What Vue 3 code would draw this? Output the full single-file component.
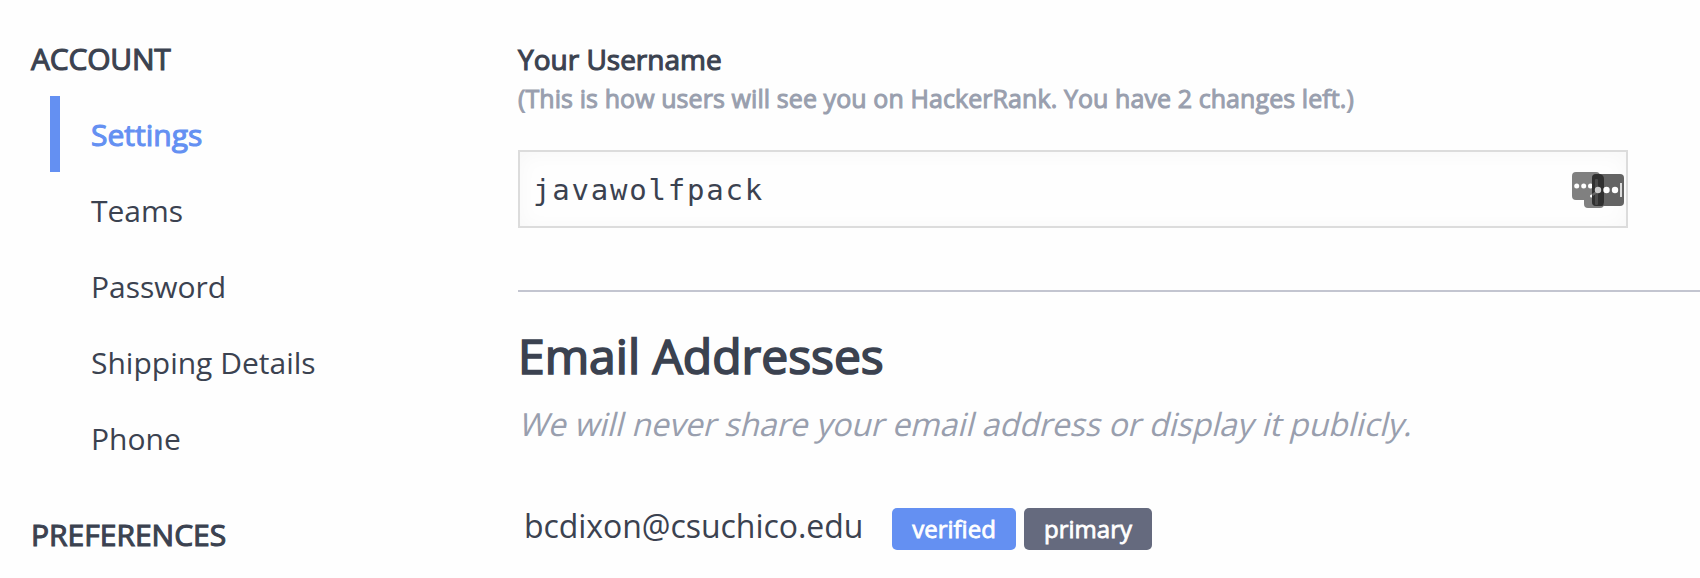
<script setup>
const accountLinks = ['Settings', 'Teams', 'Password', 'Shipping Details', 'Phone']
const active = 'Settings'
</script>

<template>
  <div class="page">
    <nav class="sidebar">
      <h3 class="group">ACCOUNT</h3>
      <ul class="links">
        <li v-for="link in accountLinks" :key="link" :class="['link', { active: link === active }]">
          <span>{{ link }}</span>
        </li>
      </ul>
      <h3 class="group second">PREFERENCES</h3>
    </nav>
    <main class="content">
      <section class="username">
        <div class="label"><span>Your Username</span></div>
        <div class="hint"><span>(This is how users will see you on HackerRank. You have 2 changes left.)</span></div>
        <div class="field">
          <span class="value">javawolfpack</span>
          <svg class="managers" width="52" height="36" viewBox="0 0 52 36">
            <path d="M4 0h20a4 4 0 0 1 4 4v8h4v20a4 4 0 0 1-4 4H16a4 4 0 0 1-4-4v-4H4a4 4 0 0 1-4-4V4a4 4 0 0 1 4-4z" fill="#808080" />
            <g fill="#fff"><circle cx="4.7" cy="14" r="2.5" /><circle cx="11.7" cy="14" r="2.5" /><circle cx="18.5" cy="14" r="2.5" /><circle cx="19.5" cy="24" r="1.5" /></g>
            <rect x="20" y="2" width="32" height="32" rx="4" fill="#646464" />
            <path d="M24 2h4q4 1 4 5v23q0 3-2 4h-6a4 4 0 0 1-4-4V6a4 4 0 0 1 4-4z" fill="#303030" />
            <rect x="23" y="7" width="3" height="26" rx="1" fill="#4b4b4b" />
            <path d="M20 22l4-3 1 2-4 3z" fill="#666" />
            <circle cx="26" cy="18" r="3.2" fill="#ccc" />
            <circle cx="34.5" cy="18" r="3.2" fill="#fff" />
            <circle cx="43" cy="18" r="3.2" fill="#fff" />
            <rect x="48" y="11" width="2" height="14" fill="#ddd" />
          </svg>
        </div>
      </section>
      <section class="emails">
        <h2 class="title"><span>Email Addresses</span></h2>
        <p class="note"><span>We will never share your email address or display it publicly.</span></p>
        <div class="row">
          <span class="address">bcdixon@csuchico.edu</span>
          <span class="badge verified">verified</span>
          <span class="badge primary">primary</span>
        </div>
      </section>
    </main>
  </div>
</template>

<style>
body {
  background: #fefefe;
}
</style>

<style scoped>
.page {
  display: flex;
  height: 578px;
  overflow: hidden;
  color: #3b4250;
  font: 30px "Open Sans", sans-serif;
  white-space: nowrap;
}
.sidebar {
  width: 518px;
  flex: none;
  box-sizing: border-box;
  padding: 39px 0 0 31px;
}
.group {
  margin: 0;
  font-size: 30px;
  font-weight: 400;
  line-height: 40px;
  letter-spacing: -0.2px;
  -webkit-text-stroke: 1.1px;
}
.second {
  margin-top: 39px;
  letter-spacing: 0;
}
.links {
  list-style: none;
  margin: 17px 0 0 19px;
  padding: 0;
}
.link {
  height: 76px;
  box-sizing: border-box;
  line-height: 78px;
  padding-left: 31px;
  border-left: 10px solid transparent;
}
.active {
  color: #6490f2;
  border-color: #6490f2;
  -webkit-text-stroke: 1.1px;
}
.content {
  flex: 1;
  min-width: 0;
}
.username {
  height: 290px;
  box-sizing: border-box;
  padding-top: 39px;
}
.label {
  font-size: 28px;
  line-height: 40px;
  -webkit-text-stroke: 1.1px;
}
.hint {
  margin-top: 1px;
  font-size: 25px;
  line-height: 36px;
  letter-spacing: 0.08px;
  color: #999fae;
  -webkit-text-stroke: 1px;
}
.field {
  display: flex;
  align-items: center;
  justify-content: space-between;
  box-sizing: border-box;
  width: 1110px;
  height: 78px;
  margin-top: 34px;
  padding: 1px 2px 0 13px;
  border: 2px solid #dcdcdc;
  box-shadow: inset 0 2px 20px rgba(0, 0, 0, 0.03);
}
.value {
  font: 29px "DejaVu Sans Mono", monospace;
  letter-spacing: 1.8px;
}
.managers {
  flex: none;
  margin-top: 1px;
}
.emails {
  border-top: 2px solid #c3c5d0;
  padding-top: 32px;
}
.title {
  margin: 0;
  font-size: 48px;
  font-weight: 400;
  line-height: 64px;
  -webkit-text-stroke: 1.7px;
}
.note {
  margin: 16px 0 0;
  font-size: 32px;
  line-height: 40px;
  letter-spacing: -0.03px;
  color: #999fae;
}
/* Slanted upright face, pivoting on the baseline */
.note span {
  display: inline-block;
  transform: skewX(-14deg);
  transform-origin: 0 32px;
}
.row {
  display: flex;
  align-items: center;
  margin-top: 60px;
  padding-left: 6px;
}
.address {
  width: 368px;
  margin-top: -3px;
  font-size: 32px;
  line-height: 36px;
  letter-spacing: -0.05px;
}
.badge {
  box-sizing: border-box;
  width: 124px;
  height: 42px;
  margin-top: 4px;
  border-radius: 5px;
  color: #fff;
  font-size: 24px;
  line-height: 42px;
  text-align: center;
  -webkit-text-stroke: 0.8px;
}
.verified {
  background: #6490f2;
}
.primary {
  width: 128px;
  margin-left: 8px;
  background: #656a7e;
}
</style>
